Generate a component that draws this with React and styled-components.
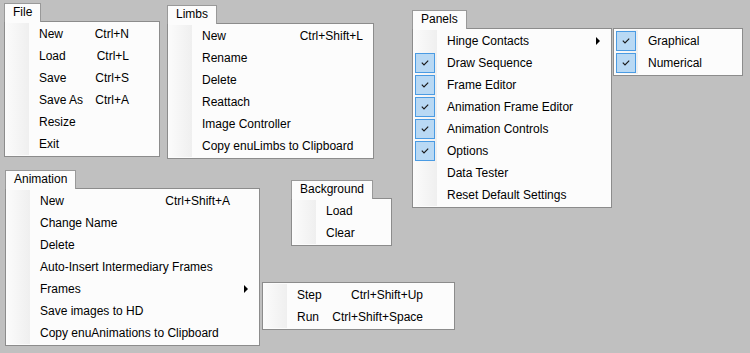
import React from "react";
import styled, { createGlobalStyle } from "styled-components";

const Global = createGlobalStyle`
  html, body { margin: 0; padding: 0; background: #c0c0c0; }
  body {
    font-family: "Liberation Sans", Arial, sans-serif;
    font-size: 12px;
    color: #000;
  }
`;

const Desk = styled.div`
  position: relative;
  width: 750px;
  height: 353px;
  overflow: hidden;
  background: #c0c0c0;
`;

/* a menu window placed on the free canvas */
const Placed = styled.div`
  position: absolute;
  left: ${(p) => p.$x}px;
  top: ${(p) => p.$y}px;
  display: flex;
  flex-direction: column;
  align-items: flex-start;
`;

const Tab = styled.div`
  position: relative;
  z-index: 1;
  box-sizing: border-box;
  height: 19px;
  margin-bottom: -1px;
  padding: 0 8px;
  border: 1px solid #999999;
  border-bottom: none;
  background: #fcfcfc;
  line-height: 17px;
  white-space: nowrap;
`;

const Panel = styled.div`
  box-sizing: border-box;
  width: ${(p) => p.$w}px;
  border: 1px solid #8c8c8c;
  padding: 1px;
  background: #fcfcfc;
  display: flex;
  flex-direction: column;
`;

const Row = styled.div`
  display: flex;
  align-items: center;
  height: 22px;
`;

const Gutter = styled.div`
  flex: none;
  align-self: stretch;
  width: 23px;
  display: flex;
  align-items: center;
  background: linear-gradient(to right, #fbfbfb, #efefef);
`;

const Check = styled.div`
  box-sizing: border-box;
  width: 20px;
  height: 20px;
  margin-left: 1px;
  border: 1px solid #4a9be3;
  background: #b9d9f4;
  display: flex;
  align-items: center;
  justify-content: center;
`;

const Label = styled.span`
  flex: 1;
  padding-left: 10px;
  white-space: nowrap;
  line-height: 22px;
`;

const Shortcut = styled.span`
  flex: none;
  padding-right: ${(p) => p.$pad}px;
  white-space: nowrap;
  line-height: 22px;
`;

const Arrow = styled.svg`
  flex: none;
  margin-right: 10px;
`;

const CheckMark = () => (
  <svg width="8" height="6" viewBox="0 0 8 6">
    <path d="M0.8 2.6 L3 4.8 L7.2 0.6" fill="none" stroke="#1a1a1a" strokeWidth="1.2" />
  </svg>
);

const Item = ({ label, keys, keyPad, checked, sub }) => (
  <Row>
    <Gutter>
      {checked && (
        <Check>
          <CheckMark />
        </Check>
      )}
    </Gutter>
    <Label>{label}</Label>
    {keys && <Shortcut $pad={keyPad}>{keys}</Shortcut>}
    {sub && (
      <Arrow width="4" height="8" viewBox="0 0 4 8">
        <polygon points="0,0 4,4 0,8" fill="#000" />
      </Arrow>
    )}
  </Row>
);

const Menu = ({ x, y, title, width, keyPad = 0, items }) => (
  <Placed $x={x} $y={y}>
    {title && <Tab>{title}</Tab>}
    <Panel $w={width}>
      {items.map((it) => (
        <Item key={it.label} keyPad={keyPad} {...it} />
      ))}
    </Panel>
  </Placed>
);

const menus = [
  {
    title: "File", x: 4, y: 3, width: 156, keyPad: 29,
    items: [
      { label: "New", keys: "Ctrl+N" },
      { label: "Load", keys: "Ctrl+L" },
      { label: "Save", keys: "Ctrl+S" },
      { label: "Save As", keys: "Ctrl+A" },
      { label: "Resize" },
      { label: "Exit" },
    ],
  },
  {
    title: "Limbs", x: 167, y: 5, width: 207, keyPad: 9,
    items: [
      { label: "New", keys: "Ctrl+Shift+L" },
      { label: "Rename" },
      { label: "Delete" },
      { label: "Reattach" },
      { label: "Image Controller" },
      { label: "Copy enuLimbs to Clipboard" },
    ],
  },
  {
    title: "Panels", x: 412, y: 10, width: 200,
    items: [
      { label: "Hinge Contacts", sub: true },
      { label: "Draw Sequence", checked: true },
      { label: "Frame Editor", checked: true },
      { label: "Animation Frame Editor", checked: true },
      { label: "Animation Controls", checked: true },
      { label: "Options", checked: true },
      { label: "Data Tester" },
      { label: "Reset Default Settings" },
    ],
  },
  {
    x: 613, y: 28, width: 130,
    items: [
      { label: "Graphical", checked: true },
      { label: "Numerical", checked: true },
    ],
  },
  {
    title: "Animation", x: 5, y: 170, width: 255, keyPad: 28,
    items: [
      { label: "New", keys: "Ctrl+Shift+A" },
      { label: "Change Name" },
      { label: "Delete" },
      { label: "Auto-Insert Intermediary Frames" },
      { label: "Frames", sub: true },
      { label: "Save images to HD" },
      { label: "Copy enuAnimations to Clipboard" },
    ],
  },
  {
    title: "Background", x: 291, y: 180, width: 101,
    items: [{ label: "Load" }, { label: "Clear" }],
  },
  {
    x: 262, y: 282, width: 193, keyPad: 30,
    items: [
      { label: "Step", keys: "Ctrl+Shift+Up" },
      { label: "Run", keys: "Ctrl+Shift+Space" },
    ],
  },
];

export default function App() {
  return (
    <>
      <Global />
      <Desk>
        {menus.map((m, i) => (
          <Menu key={i} {...m} />
        ))}
      </Desk>
    </>
  );
}
